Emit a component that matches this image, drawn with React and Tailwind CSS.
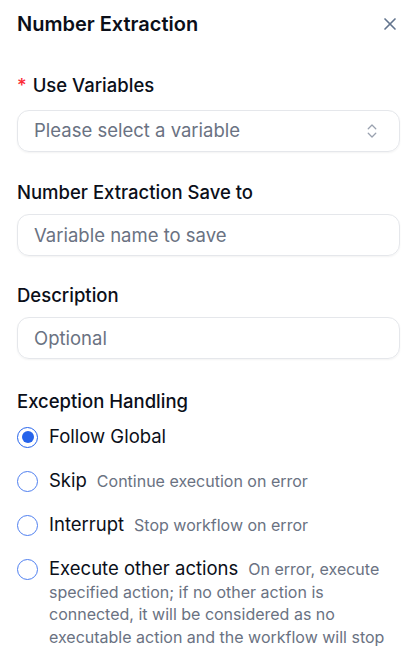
import React, { useState } from "react";
import { X, ChevronsUpDown } from "lucide-react";

const options = [
  { id: "global", label: "Follow Global", desc: "" },
  { id: "skip", label: "Skip", desc: "Continue execution on error" },
  { id: "interrupt", label: "Interrupt", desc: "Stop workflow on error" },
  {
    id: "other",
    label: "Execute other actions",
    desc: "On error, execute specified action; if no other action is connected, it will be considered as no executable action and the workflow will stop",
  },
];

const Radio = ({ checked }) => (
  <span
    className={
      checked
        ? "w-[21px] h-[21px] rounded-full border-[1.5px] border-[#2563eb] flex items-center justify-center shrink-0"
        : "w-[21px] h-[21px] rounded-full border-[1.5px] border-[#4f7ff0] shrink-0"
    }
  >
    {checked && <span className="w-[12px] h-[12px] rounded-full bg-[#2563eb]" />}
  </span>
);

const App = () => {
  const [mode, setMode] = useState("global");

  return (
    <div
      className="w-[420px] h-[662px] bg-white pl-[17px] pr-[20px] overflow-hidden text-[#0b0f19]"
      style={{ fontFamily: "Inter, 'Noto Sans', sans-serif" }}
    >
      {/* Header */}
      <div className="flex items-center justify-between pt-[10px] h-[38px]">
        <h1 className="text-[20px] leading-[28px] font-semibold">Number Extraction</h1>
        <button className="text-slate-500">
          <X size={20} strokeWidth={2} />
        </button>
      </div>

      {/* Use Variables */}
      <div className="mt-[33px]">
        <label className="block text-[18.5px] leading-[28px] font-medium">
          <span className="text-red-500 mr-[6px]">*</span>Use Variables
        </label>
        <button className="mt-[11px] w-full h-[42px] rounded-xl border border-gray-200 shadow-xs flex items-center justify-between pl-[16px] pr-[18px] text-[18.5px] text-gray-500">
          <span>Please select a variable</span>
          <ChevronsUpDown size={18} strokeWidth={1.75} className="text-gray-400" />
        </button>
      </div>

      {/* Save to */}
      <div className="mt-[26px]">
        <label className="block text-[18.5px] leading-[28px] font-medium">Number Extraction Save to</label>
        <input
          placeholder="Variable name to save"
          className="mt-[8px] w-full h-[42px] rounded-xl border border-gray-200 shadow-xs px-[16px] text-[18.5px] placeholder:text-gray-500 outline-none"
        />
      </div>

      {/* Description */}
      <div className="mt-[25px]">
        <label className="block text-[18.5px] leading-[28px] font-medium">Description</label>
        <input
          placeholder="Optional"
          className="mt-[8px] w-full h-[42px] rounded-xl border border-gray-200 shadow-xs px-[16px] text-[18.5px] placeholder:text-gray-500 outline-none"
        />
      </div>

      {/* Exception Handling */}
      <div className="mt-[28px]">
        <label className="block text-[18.5px] leading-[28px] font-medium">Exception Handling</label>
        <div className="mt-[11px] flex flex-col gap-[21.5px]">
          {options.map((o) => (
            <div key={o.id} className="flex items-start gap-[11px] cursor-pointer" onClick={() => setMode(o.id)}>
              <span className="h-[22.5px] flex items-center">
                <Radio checked={mode === o.id} />
              </span>
              <p className="text-[16px] leading-[22.5px]">
                <span className="text-[18.5px] leading-[18px]">{o.label}</span>
                {o.desc && <span className="ml-[10px] text-gray-500">{o.desc}</span>}
              </p>
            </div>
          ))}
        </div>
      </div>
    </div>
  );
};

export default App;
